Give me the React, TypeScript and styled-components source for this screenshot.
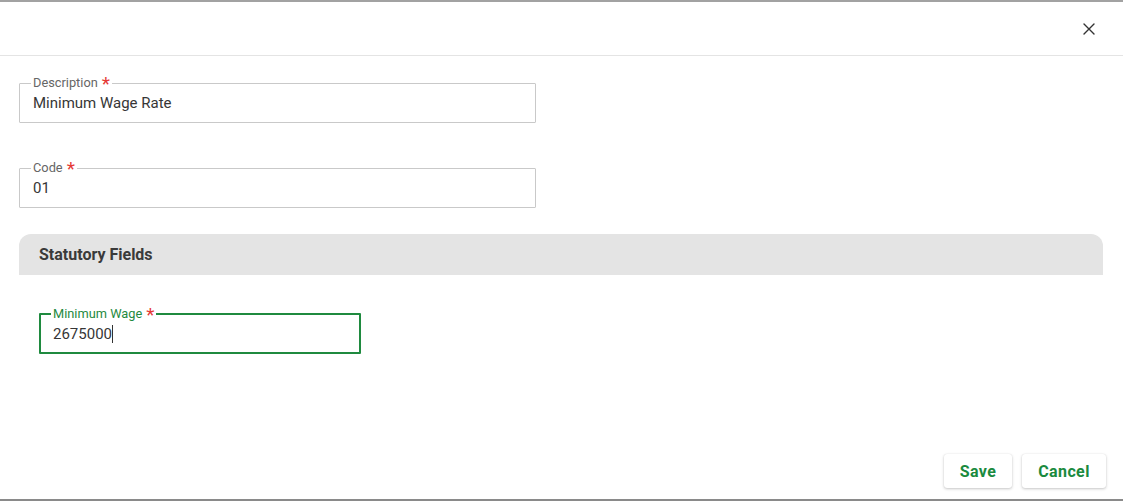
import React from "react";
import styled, { createGlobalStyle } from "styled-components";

const Global = createGlobalStyle`
  html, body { margin: 0; padding: 0; background: #9b9b9b; }
  body { font-family: Roboto, "Liberation Sans", Arial, sans-serif; }
  * { box-sizing: border-box; }
`;

const Page = styled.div`
  width: 1123px;
  height: 501px;
  display: flex;
  flex-direction: column;
  background: #8f8f8f;
`;

const TopStrip = styled.div`
  height: 2px;
  background: #a2a2a2;
  flex: none;
`;

const Dialog = styled.div`
  height: 497px;
  background: #ffffff;
  display: flex;
  flex-direction: column;
`;

const Header = styled.div`
  height: 54px;
  border-bottom: 1px solid #e4e4e4;
  display: flex;
  align-items: center;
  justify-content: flex-end;
  padding-right: 27px;
  flex: none;
`;

const CloseButton = styled.button`
  border: none;
  background: none;
  padding: 0;
  width: 14px;
  height: 14px;
  display: flex;
  align-items: center;
  justify-content: center;
  cursor: pointer;
  color: #333;
`;

const Body = styled.div`
  flex: 1;
  padding: 20px 0 0 19px;
  display: flex;
  flex-direction: column;
`;

const Field = styled.fieldset<{ $w: number; $focus?: boolean }>`
  margin: 0;
  min-width: 0;
  width: ${(p) => p.$w}px;
  padding: 0 12px 0 ${(p) => (p.$focus ? 10 : 11)}px;
  border: ${(p) => (p.$focus ? "2px solid #1f8a3f" : "1px solid #c9c9c9")};
  border-radius: 1px;
  height: 47px;
`;

const Legend = styled.legend<{ $focus?: boolean }>`
  padding: 0 2px;
  font-size: 12.8px;
  line-height: 14px;
  color: ${(p) => (p.$focus ? "#1f8a3f" : "#666666")};
`;

const Star = styled.span`
  color: #e53935;
  font-size: 19px;
  margin-left: 4px;
  line-height: 0;
  position: relative;
  top: 3px;
`;

const Value = styled.div`
  font-size: 15px;
  line-height: 22px;
  color: #363636;
  padding-left: 2px;
  margin-top: 2px;
  display: flex;
  align-items: center;
`;

const Caret = styled.span`
  display: inline-block;
  width: 1px;
  height: 18px;
  background: #333;
`;

const Gap = styled.div<{ $h: number }>`
  height: ${(p) => p.$h}px;
  flex: none;
`;

const SectionHead = styled.div`
  height: 41px;
  width: 1084px;
  background: #e4e4e4;
  border-radius: 12px 12px 0 0;
  display: flex;
  align-items: center;
  padding-left: 20px;
  font-size: 16px;
  font-weight: 700;
  color: #3a3a3a;
`;

const SectionBody = styled.div`
  padding: 32px 20px 0 20px;
`;

const Footer = styled.div`
  margin-top: auto;
  display: flex;
  justify-content: flex-end;
  gap: 10px;
  padding: 0 17px 11px 0;
`;

const Button = styled.button<{ $w: number }>`
  width: ${(p) => p.$w}px;
  height: 34px;
  border: none;
  background: #fff;
  border-radius: 3px;
  box-shadow: 0 1px 3px rgba(0, 0, 0, 0.22), 0 0 1px rgba(0, 0, 0, 0.12);
  font-family: Roboto, "Liberation Sans", Arial, sans-serif;
  font-size: 16px;
  font-weight: 700;
  color: #1a8a3e;
  letter-spacing: 0.4px;
  cursor: pointer;
`;

const BottomLine = styled.div`
  height: 2px;
  background: #8a8a8a;
  flex: none;
`;

export default function App() {
  return (
    <>
      <Global />
      <Page>
        <TopStrip />
        <Dialog>
          <Header>
            <CloseButton aria-label="Close">
              <svg width="12" height="12" viewBox="0 0 12 12">
                <path d="M1 1L11 11M11 1L1 11" stroke="#333" strokeWidth="1.4" strokeLinecap="round" />
              </svg>
            </CloseButton>
          </Header>
          <Body>
            <Field $w={517}>
              <Legend>
                Description<Star>*</Star>
              </Legend>
              <Value>Minimum Wage Rate</Value>
            </Field>
            <Gap $h={38} />
            <Field $w={517}>
              <Legend>
                Code<Star>*</Star>
              </Legend>
              <Value>01</Value>
            </Field>
            <Gap $h={26} />
            <SectionHead>Statutory Fields</SectionHead>
            <SectionBody>
              <Field $w={322} $focus>
                <Legend $focus>
                  Minimum Wage<Star>*</Star>
                </Legend>
                <Value>
                  2675000
                  <Caret />
                </Value>
              </Field>
            </SectionBody>
            <Footer>
              <Button $w={68}>Save</Button>
              <Button $w={84}>Cancel</Button>
            </Footer>
          </Body>
        </Dialog>
        <BottomLine />
      </Page>
    </>
  );
}
